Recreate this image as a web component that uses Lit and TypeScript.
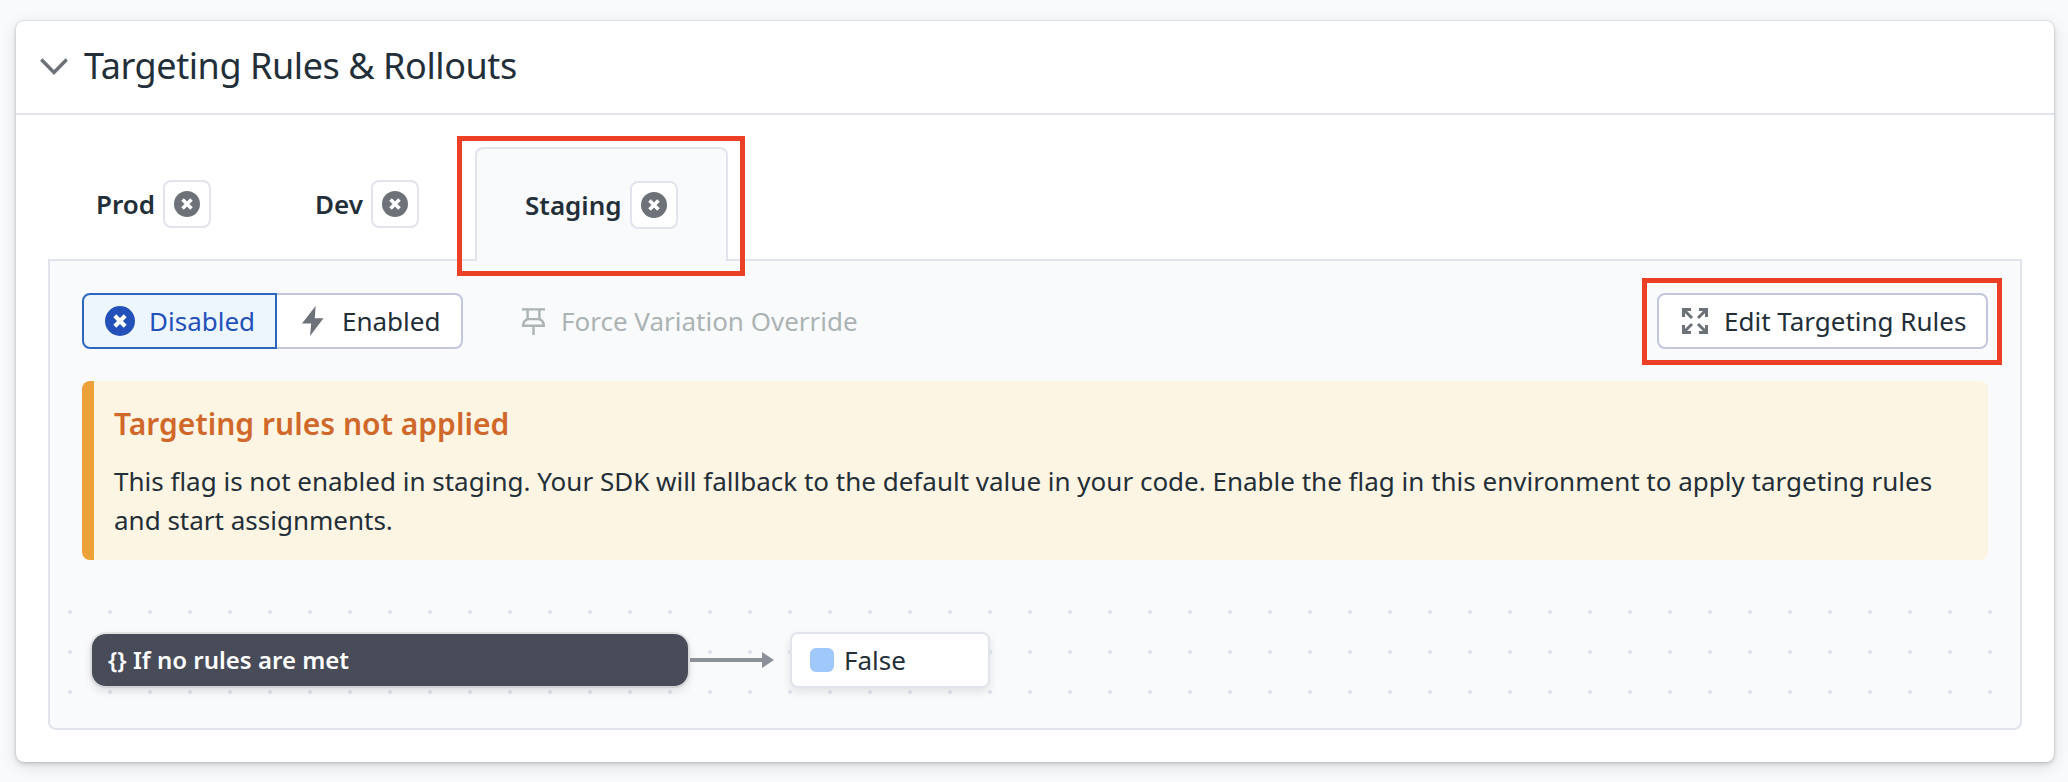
import { LitElement, html, css, svg } from "lit";
import { customElement, property } from "lit/decorators.js";
import { classMap } from "lit/directives/class-map.js";

@customElement("status-icon")
class StatusIcon extends LitElement {
  static styles = css`
    :host { display: block; width: 26px; height: 26px; flex: none; }
    .icon { display: block; width: 100%; height: 100%; }
  `;
  render() {
    return html`<svg class="icon" viewBox="0 0 26 26">
      <circle cx="13" cy="13" r="13" fill="currentColor" />
      <path d="M8.5 8.5L17.5 17.5M17.5 8.5L8.5 17.5" stroke="#fff" stroke-width="3.6" fill="none" />
    </svg>`;
  }
}

@customElement("env-tab")
class EnvTab extends LitElement {
  @property() name = "";
  @property({ type: Boolean }) active = false;
  static styles = css`
    :host { display: block; }
    .tab { box-sizing: border-box; height: 114px; padding: 0 48px; display: flex; align-items: center; gap: 8px; }
    .active {
      position: relative; border: 2px solid #e1e4ed; border-bottom: 0;
      border-radius: 8px 8px 0 0; background: #f9fafc;
    }
    .active::after {
      content: ""; position: absolute; inset: -13px -19px -15px -20px;
      border: 5px solid #eb4025; pointer-events: none;
    }
    .name { font-weight: 600; font-size: 26px; line-height: 36px; }
    .badge {
      box-sizing: border-box; width: 48px; height: 48px; border: 2px solid #e1e4ed; border-radius: 8px;
      background: #fff; color: #6c7277; display: grid; place-items: center;
    }
  `;
  render() {
    return html`<div class=${classMap({ tab: true, active: this.active })}>
      <span class="name">${this.name}</span>
      <span class="badge"><status-icon></status-icon></span>
    </div>`;
  }
}

const chevron = svg`<path d="M1.3 1.5L14 14.5L26.7 1.5" fill="none" stroke="#6c7277" stroke-width="3.4"/>`;
const bolt = svg`<path d="M13.6 0L0 17.5H9.2L8 30L21.5 12.2H12.8Z" fill="#6c7277"/>`;
const pin = svg`<path d="M0 1.4H23M5.6 1.4V11M17.4 1.4V11M5 11.1H18M6 11C3 12 1.2 14.4 1.2 17.8H21.8C21.8 14.4 20 12 17 11M11.5 18V27" fill="none" stroke="#abb3b3" stroke-width="2.4"/>`;
const expand = svg`<g fill="none" stroke="#6c7277" stroke-width="3">
  <path d="M1.5 9V1.5H9M2 2L10 10"/><path d="M17 1.5H24.5V9M24 2L16 10"/>
  <path d="M1.5 17V24.5H9M2 24L10 16"/><path d="M17 24.5H24.5V17M24 24L16 16"/></g>`;

@customElement("app-root")
class AppRoot extends LitElement {
  static styles = css`
    :host {
      display: block; box-sizing: border-box; height: 782px; overflow: hidden;
      padding: 21px 14px 20px 16px; background: #f9fafc; color: #232f38;
      font-family: "Noto Sans", sans-serif; font-size: 26px; line-height: 36px;
    }
    svg { display: block; flex: none; }
    .card {
      box-sizing: border-box; height: 741px; background: #fff; border-radius: 8px;
      box-shadow: 0 0 2px rgba(17, 20, 24, 0.2), 0 2px 4px rgba(17, 20, 24, 0.14), 0 4px 16px rgba(17, 20, 24, 0.13);
    }
    .header {
      box-sizing: border-box; height: 94px; padding: 0 24px 2px; border-bottom: 2px solid #e1e4ea;
      display: flex; align-items: center; gap: 16px;
    }
    .header svg { margin-top: 1px; }
    .title { margin: 0; font-size: 36px; font-weight: 400; line-height: 48px; letter-spacing: -0.43px; }
    .body { padding: 32px 32px 0; }
    .tabs { display: flex; gap: 8px; position: relative; z-index: 1; }
    .panel {
      box-sizing: border-box; height: 471px; margin-top: -2px; padding-top: 32px;
      border: 2px solid #e1e4ed; border-radius: 0 0 8px 8px; background: #f9fafc;
    }
    .toolbar { display: flex; padding: 0 32px; height: 56px; }
    .button {
      box-sizing: border-box; height: 56px; border: 2px solid #c3c7de; background: #fff;
      display: flex; align-items: center; border-radius: 8px; white-space: nowrap;
    }
    .disabled {
      width: 195px; padding-left: 21px; gap: 14px; border-color: #2c66bd; border-radius: 8px 0 0 8px;
      background: #edf6fc; color: #2450ba;
    }
    .disabled status-icon { width: 30px; height: 30px; }
    .enabled { width: 186px; padding-left: 25px; gap: 18px; border-left: 0; border-radius: 0 8px 8px 0; }
    .force { display: flex; align-items: center; gap: 16px; margin-left: 59px; color: #abb3b3; }
    .edit { position: relative; width: 331px; margin-left: auto; padding-left: 23px; gap: 16px; }
    .edit::after {
      content: ""; position: absolute; inset: -17px -16px -18px -17px;
      border: 5px solid #eb4025; pointer-events: none;
    }
    .alert {
      box-sizing: border-box; height: 179px; margin: 32px 32px; padding: 23px 20px 0;
      border-left: 12px solid #eca139; border-radius: 8px; background: #fdf5e3;
    }
    .alert-title { margin: 0 0 18px; font-size: 30px; line-height: 40px; font-weight: 600; color: #d1682b; letter-spacing: 0.03px; }
    .alert-text { margin: 0; line-height: 39px; }
    .canvas {
      box-sizing: border-box; height: 120px; padding: 40px 40px 0; display: flex;
      background: radial-gradient(circle, #e1e4ed 1.8px, transparent 2.3px) 0 0 / 40px 40px;
    }
    .rule {
      box-sizing: border-box; width: 596px; height: 52px; margin: 2px 2px 0; padding: 0 16px;
      border-radius: 14px; background: #484b58; color: #fff; font-size: 24px; font-weight: 600; line-height: 52px;
      box-shadow: 0 0 0 2px rgba(17, 20, 24, 0.08), 0 4px 10px rgba(17, 20, 24, 0.15);
    }
    .arrow { margin: 20px 16px 0 0; }
    .value {
      box-sizing: border-box; width: 200px; height: 56px; padding-left: 18px; border: 2px solid #e1e4ea;
      border-radius: 8px; background: #fff; display: flex; align-items: center; gap: 10px;
      box-shadow: 0 4px 8px rgba(17, 20, 24, 0.1);
    }
    .swatch { width: 24px; height: 24px; border-radius: 6px; background: #a0c8fa; }
  `;
  render() {
    return html`<section class="card">
      <header class="header">
        <svg width="28" height="17" viewBox="0 0 28 17">${chevron}</svg>
        <h1 class="title">Targeting Rules &amp; Rollouts</h1>
      </header>
      <div class="body">
        <nav class="tabs">
          <env-tab name="Prod"></env-tab>
          <env-tab name="Dev"></env-tab>
          <env-tab name="Staging" active></env-tab>
        </nav>
        <div class="panel">
          <div class="toolbar">
            <div class="button disabled"><status-icon></status-icon><span>Disabled</span></div>
            <div class="button enabled"><svg width="22" height="30" viewBox="0 0 22 30">${bolt}</svg><span>Enabled</span></div>
            <div class="force"><svg width="23" height="27" viewBox="0 0 23 27">${pin}</svg><span>Force Variation Override</span></div>
            <div class="button edit"><svg width="26" height="26" viewBox="0 0 26 26">${expand}</svg><span>Edit Targeting Rules</span></div>
          </div>
          <div class="alert">
            <h2 class="alert-title">Targeting rules not applied</h2>
            <p class="alert-text">This flag is not enabled in staging. Your SDK will fallback to the default value in your code. Enable the flag in this environment to apply targeting rules and start assignments.</p>
          </div>
          <div class="canvas">
            <div class="rule">{} If no rules are met</div>
            <svg class="arrow" width="84" height="16" viewBox="0 0 84 16"><path d="M0 6H72V0L84 8L72 16V10H0Z" fill="#8b8f97"/></svg>
            <div class="value"><span class="swatch"></span><span>False</span></div>
          </div>
        </div>
      </div>
    </section>`;
  }
}
